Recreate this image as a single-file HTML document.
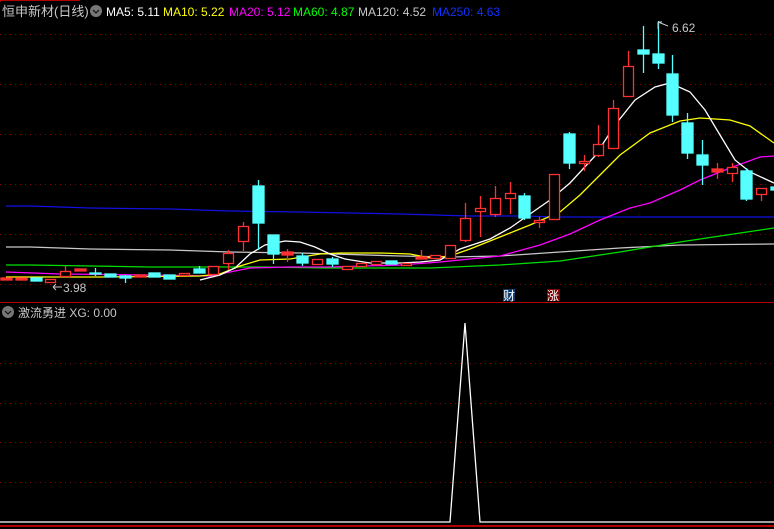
<!DOCTYPE html>
<html><head><meta charset="utf-8"><style>
html,body{margin:0;padding:0;background:#000;overflow:hidden}
svg{display:block}
text{font-family:"Liberation Sans","Noto Sans CJK SC",sans-serif}
</style></head><body>
<svg width="774" height="529" viewBox="0 0 774 529" xmlns="http://www.w3.org/2000/svg">
<rect width="774" height="529" fill="#000"/>
<g stroke="#8a0000" stroke-width="1" stroke-dasharray="1,4">
<line x1="0" y1="34.5" x2="774" y2="34.5"/><line x1="0" y1="84.5" x2="774" y2="84.5"/>
<line x1="0" y1="134.5" x2="774" y2="134.5"/><line x1="0" y1="184.5" x2="774" y2="184.5"/>
<line x1="0" y1="234.5" x2="774" y2="234.5"/><line x1="0" y1="284.5" x2="774" y2="284.5"/>
<line x1="0" y1="363.5" x2="774" y2="363.5"/><line x1="0" y1="403.5" x2="774" y2="403.5"/>
<line x1="0" y1="442.5" x2="774" y2="442.5"/><line x1="0" y1="482.5" x2="774" y2="482.5"/>
</g>
<line x1="0" y1="302.5" x2="774" y2="302.5" stroke="#b00000"/>
<line x1="0" y1="526" x2="774" y2="526" stroke="#b00000" stroke-width="2"/>
<path d="M0.5 0 V2 M0.5 0.5 H80" stroke="#b00000" fill="none"/>
<text x="2" y="16" font-size="13" fill="#c8c8c8">恒申新材(日线)</text>
<circle cx="96" cy="11" r="6" fill="#777"/><path d="M93 10 L96 13 L99 10" stroke="#222" stroke-width="1.5" fill="none"/>
<text y="16" font-size="12"><tspan x="106" fill="#fff">MA5: 5.11</tspan><tspan x="163" fill="#ff0">MA10: 5.22</tspan><tspan x="229" fill="#f0f">MA20: 5.12</tspan><tspan x="293" fill="#0f0">MA60: 4.87</tspan><tspan x="358" fill="#c8c8c8">MA120: 4.52</tspan><tspan x="432" fill="#1030ff">MA250: 4.63</tspan></text>
<g fill="none" stroke-width="1.3">
<polyline stroke="#1010e0" points="6,206 30,206 90,208 170,209 230,211 300,212 400,214 470,216 520,216 560,217 600,217 774,217"/>
<polyline stroke="#c8c8c8" points="6,247 30,247 90,249 170,250 230,252 300,253 400,256 450,257 500,256 560,252 620,248 680,245 774,244"/>
<polyline stroke="#00e000" points="6,265 30,265 150,267 265,267 325,268 430,268 500,265 560,261 620,252 680,242 720,236 774,228"/>
<polyline stroke="#f0f" points="6,272 60,274 150,275 210,276 230,272 250,268 290,267 330,267 400,265 440,262 500,256 540,245 570,234 600,220 630,208 650,203 680,190 700,180 730,168 760,157 774,156"/>
<polyline stroke="#ff0" points="6,277 100,277 200,276 220,274 240,266 260,260 290,259 320,254 340,253 380,253 410,254 430,258 450,256 470,249 500,237 530,225 560,212 580,195 600,175 620,155 650,133 680,121 700,118 730,120 750,126 774,143"/>
<polyline stroke="#fff" points="200,280 220,275 235,268 250,254 265,245 285,241 300,242 315,247 330,254 345,259 370,263 400,263 420,262 440,260 460,249 490,239 510,228 530,214 550,200 570,183 595,156 615,125 635,100 655,87 670,83 690,92 705,110 720,135 735,160 750,172 774,183"/>
</g>
<g stroke-width="1.3">
<g stroke="#ff3030" fill="#000">
<rect x="1" y="278" width="11" height="2" fill="#ff3030"/>
<rect x="16" y="278" width="11" height="2" fill="#ff3030"/>
<rect x="45.5" y="279.5" width="10" height="3"/>
<line x1="65.5" y1="266" x2="65.5" y2="271"/><rect x="60.5" y="271.5" width="10" height="5"/>
<rect x="75" y="269" width="11" height="2" fill="#ff3030"/>
<rect x="135" y="275" width="11" height="2" fill="#ff3030"/>
<rect x="179.5" y="273.5" width="10" height="2"/>
<rect x="208.5" y="266.5" width="10" height="8"/>
<line x1="228.5" y1="250" x2="228.5" y2="270"/><rect x="223.5" y="253.5" width="10" height="10"/>
<line x1="243.5" y1="222" x2="243.5" y2="251"/><rect x="238.5" y="226.5" width="10" height="15"/>
<line x1="287.5" y1="249" x2="287.5" y2="262"/><rect x="282" y="252" width="11" height="3" fill="#ff3030"/>
<rect x="312.5" y="259.5" width="10" height="5"/>
<rect x="342.5" y="266.5" width="10" height="3"/>
<rect x="356.5" y="263.5" width="10" height="3"/>
<rect x="371.5" y="261.5" width="10" height="3"/>
<rect x="401.5" y="263.5" width="10" height="2"/>
<line x1="421.5" y1="250" x2="421.5" y2="258"/><rect x="416" y="257" width="11" height="2" fill="#ff3030"/>
<rect x="430.5" y="255.5" width="10" height="3"/>
<rect x="445.5" y="245.5" width="10" height="13"/>
<line x1="465.5" y1="203" x2="465.5" y2="242"/><rect x="460.5" y="218.5" width="10" height="22"/>
<line x1="480.5" y1="196" x2="480.5" y2="237"/><rect x="475.5" y="208.5" width="10" height="3"/>
<line x1="495.5" y1="186" x2="495.5" y2="217"/><rect x="490.5" y="198.5" width="10" height="16"/>
<line x1="510.5" y1="182" x2="510.5" y2="214"/><rect x="505.5" y="193.5" width="10" height="5"/>
<line x1="539.5" y1="217" x2="539.5" y2="228"/><rect x="534.5" y="220.5" width="10" height="2"/>
<rect x="549.5" y="174.5" width="10" height="45"/>
<line x1="584.5" y1="155" x2="584.5" y2="171"/><rect x="579.5" y="161.5" width="10" height="2"/>
<line x1="598.5" y1="125" x2="598.5" y2="157"/><rect x="593.5" y="144.5" width="10" height="11"/>
<line x1="613.5" y1="100" x2="613.5" y2="108"/><rect x="608.5" y="108.5" width="10" height="40"/>
<line x1="628.5" y1="51" x2="628.5" y2="66"/><rect x="623.5" y="66.5" width="10" height="30"/>
<line x1="717.5" y1="163" x2="717.5" y2="179"/><rect x="712" y="169" width="11" height="3" fill="#ff3030"/>
<line x1="732.5" y1="163" x2="732.5" y2="182"/><rect x="727.5" y="167.5" width="10" height="6"/>
<line x1="761.5" y1="194" x2="761.5" y2="201"/><rect x="756.5" y="188.5" width="10" height="6"/>
</g>
<g stroke="#55ffff" fill="#55ffff">
<rect x="31" y="278" width="11" height="3"/>
<line x1="95.5" y1="268" x2="95.5" y2="276"/><rect x="90" y="273" width="11" height="1"/>
<rect x="105" y="274" width="11" height="3"/>
<line x1="125.5" y1="275" x2="125.5" y2="283"/><rect x="120" y="276" width="11" height="2"/>
<rect x="149" y="273" width="11" height="4"/>
<rect x="164" y="275" width="11" height="4"/>
<line x1="199.5" y1="266" x2="199.5" y2="272"/><rect x="194" y="269" width="11" height="4"/>
<line x1="258.5" y1="180" x2="258.5" y2="250"/><rect x="253" y="186" width="11" height="37"/>
<line x1="273.5" y1="235" x2="273.5" y2="264"/><rect x="268" y="235" width="11" height="19"/>
<line x1="302.5" y1="253" x2="302.5" y2="266"/><rect x="297" y="256" width="11" height="7"/>
<line x1="332.5" y1="257" x2="332.5" y2="267"/><rect x="327" y="259" width="11" height="5"/>
<rect x="386" y="261" width="11" height="3"/>
<line x1="524.5" y1="193" x2="524.5" y2="220"/><rect x="519" y="196" width="11" height="22"/>
<line x1="569.5" y1="132" x2="569.5" y2="169"/><rect x="564" y="134" width="11" height="29"/>
<line x1="643.5" y1="26" x2="643.5" y2="73"/><rect x="638" y="50" width="11" height="4"/>
<line x1="658.5" y1="21" x2="658.5" y2="69"/><rect x="653" y="54" width="11" height="9"/>
<line x1="672.5" y1="55" x2="672.5" y2="122"/><rect x="667" y="74" width="11" height="41"/>
<line x1="687.5" y1="113" x2="687.5" y2="159"/><rect x="682" y="123" width="11" height="30"/>
<line x1="702.5" y1="140" x2="702.5" y2="185"/><rect x="697" y="155" width="11" height="10"/>
<line x1="746.5" y1="168" x2="746.5" y2="201"/><rect x="741" y="171" width="11" height="28"/>
<rect x="771" y="187" width="4" height="3"/>
</g>
</g>
<path d="M658 22 L658 29 M658 22 L662 22 M658 22 L668 26" stroke="#c8c8c8" fill="none"/>
<text x="672" y="32" font-size="12" fill="#c8c8c8">6.62</text>
<path d="M53 287 L62 287 M53 287 L56 284 M53 287 L56 290" stroke="#c8c8c8" fill="none"/>
<text x="63" y="292" font-size="12" fill="#c8c8c8">3.98</text>
<rect x="503" y="289" width="12" height="12" fill="#0d3a6a"/>
<text x="503" y="300" font-size="12" fill="#fff">财</text>
<rect x="547" y="289" width="13" height="12" fill="#7a0000"/>
<text x="547" y="300" font-size="12" fill="#fff">涨</text>
<circle cx="8" cy="312" r="6" fill="#777"/><path d="M5 311 L8 314 L11 311" stroke="#222" stroke-width="1.5" fill="none"/>
<text x="18" y="317" font-size="12" fill="#c8c8c8">激流勇进 XG: 0.00</text>
<polyline fill="none" stroke="#fff" stroke-width="1.3" points="0,522 450,522 465,323 480,522 774,522"/>
</svg>
</body></html>
